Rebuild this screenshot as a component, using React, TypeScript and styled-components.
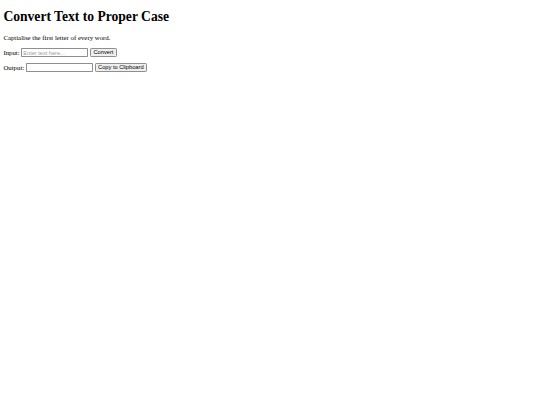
import { useState } from "react";
import styled, { createGlobalStyle } from "styled-components";

// the reference is a plain default-styled page shown at about 42%
const GlobalStyle = createGlobalStyle`
  html, body {
    margin: 0;
    background: #fff;
  }
  body {
    padding: 9.1px 3.4px;
    font-family: "Liberation Serif", "Times New Roman", serif;
    color: #000;
  }
`;

const Page = styled.main`
  display: flex;
  flex-direction: column;
  align-items: flex-start;
`;

const Title = styled.h1`
  margin: 0 0 9.1px;
  font-size: 13.6px;
  font-weight: bold;
  line-height: 1.15;
`;

const Line = styled.p`
  margin: 0 0 6.6px;
  font-size: 6.8px;
  line-height: 1.15;
  display: flex;
  align-items: center;
  gap: 1.7px;
`;

const TextBox = styled.input`
  box-sizing: border-box;
  width: 67px;
  height: 8.6px;
  margin: 0;
  padding: 0 1px;
  border: 0.8px solid #8f8f8f;
  border-radius: 0.8px;
  font-family: "Liberation Sans", Arial, sans-serif;
  font-size: 5.6px;
  color: #000;
  background: #fff;
  outline: none;

  &::placeholder {
    color: #9a9a9a;
  }
`;

const Button = styled.button`
  box-sizing: border-box;
  height: 8.6px;
  margin: 0;
  padding: 0 2.5px;
  border: 0.8px solid #8f8f8f;
  border-radius: 1.2px;
  background: #efefef;
  font-family: "Liberation Sans", Arial, sans-serif;
  font-size: 5.7px;
  color: #000;
  line-height: 1;
  cursor: pointer;
`;

const toProperCase = (s: string) =>
  s.toLowerCase().replace(/\b\w/g, (c) => c.toUpperCase());

export default function App() {
  const [input, setInput] = useState("");
  const [output, setOutput] = useState("");

  return (
    <Page>
      <GlobalStyle />
      <Title>Convert Text to Proper Case</Title>
      <Line>Captialise the first letter of every word.</Line>
      <Line>
        Input:
        <TextBox
          placeholder="Enter text here..."
          value={input}
          onChange={(e) => setInput(e.target.value)}
        />
        <Button onClick={() => setOutput(toProperCase(input))}>Convert</Button>
      </Line>
      <Line>
        Output:
        <TextBox value={output} readOnly />
        <Button onClick={() => navigator.clipboard?.writeText(output)}>
          Copy to Clipboard
        </Button>
      </Line>
    </Page>
  );
}
